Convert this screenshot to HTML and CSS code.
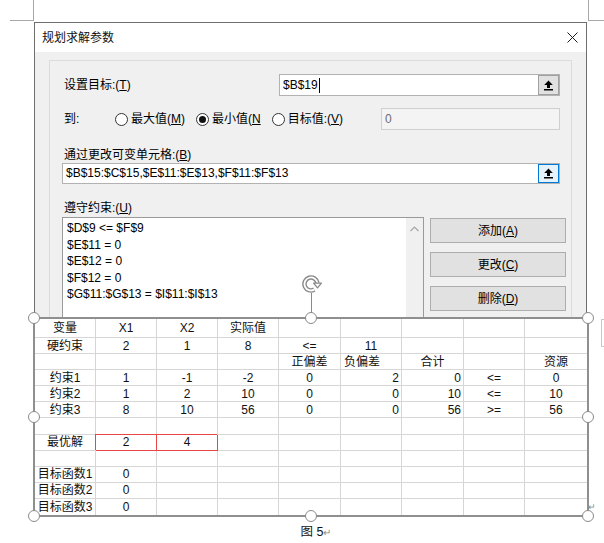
FILE: index.html
```html
<!DOCTYPE html>
<html lang="zh-CN">
<head>
<meta charset="utf-8">
<title>规划求解参数</title>
<link rel="stylesheet" href="styles.css">
</head>
<body>
<div class="page">
  <div class="marks"><div class="mark mark-l"></div><div class="mark mark-r"></div></div>
  <div class="figure">
    <div class="dialog">
      <div class="titlebar">
        <span class="title">规划求解参数</span>
        <svg class="close" width="11" height="11" viewBox="0 0 11 11"><path d="M0.5 0.5 L10.5 10.5 M10.5 0.5 L0.5 10.5" stroke="#1a1a1a" stroke-width="1" fill="none"/></svg>
      </div>
      <div class="dlg-body">
        <div class="group">
          <div class="row row-target">
            <span class="lbl">设置目标:(<u>T</u>)</span>
            <div class="field field-target">
              <span class="val">$B$19<span class="caret"></span></span>
              <span class="pick"><svg width="11" height="11" viewBox="0 0 11 11"><path d="M5.5 0.5 L9.8 5 H7 V8 H4 V5 H1.2 Z" fill="#000"/><rect x="1" y="9" width="9" height="1.5" fill="#000"/></svg></span>
            </div>
          </div>
          <div class="row row-to">
            <span class="lbl lbl-to">到:</span>
            <span class="opt"><span class="radio"></span>最大值(<u>M</u>)</span>
            <span class="opt"><span class="radio on"></span>最小值(<u>N</u></span>
            <span class="opt"><span class="radio"></span>目标值:(<u>V</u>)</span>
            <div class="field field-value disabled"><span class="val">0</span></div>
          </div>
          <div class="lbl lbl-block">通过更改可变单元格:(<u>B</u>)</div>
          <div class="field field-cells">
            <span class="val">$B$15:$C$15,$E$11:$E$13,$F$11:$F$13</span>
            <span class="pick focus"><svg width="11" height="11" viewBox="0 0 11 11"><path d="M5.5 0.5 L9.8 5 H7 V8 H4 V5 H1.2 Z" fill="#000"/><rect x="1" y="9" width="9" height="1.5" fill="#000"/></svg></span>
          </div>
          <div class="lbl lbl-block lbl-cons">遵守约束:(<u>U</u>)</div>
          <div class="cons">
            <div class="listbox">
              <div class="items">
                <div class="item">$D$9 &lt;= $F$9</div>
                <div class="item">$E$11 = 0</div>
                <div class="item">$E$12 = 0</div>
                <div class="item">$F$12 = 0</div>
                <div class="item">$G$11:$G$13 = $I$11:$I$13</div>
              </div>
              <div class="scroll"><svg width="9" height="6" viewBox="0 0 9 6"><path d="M0.5 5 L4.5 1 L8.5 5" stroke="#a6a6a6" stroke-width="1.2" fill="none"/></svg></div>
            </div>
            <div class="btns">
              <div class="btn">添加(<u>A</u>)</div>
              <div class="btn">更改(<u>C</u>)</div>
              <div class="btn">删除(<u>D</u>)</div>
            </div>
          </div>
        </div>
      </div>
    </div>

    <div class="sheet">
      <div class="grid">
        <div class="c">变量</div><div class="c">X1</div><div class="c">X2</div><div class="c">实际值</div><div class="c"></div><div class="c"></div><div class="c"></div><div class="c"></div><div class="c"></div>
        <div class="c">硬约束</div><div class="c">2</div><div class="c">1</div><div class="c">8</div><div class="c">&lt;=</div><div class="c">11</div><div class="c"></div><div class="c"></div><div class="c"></div>
        <div class="c"></div><div class="c"></div><div class="c"></div><div class="c"></div><div class="c">正偏差</div><div class="c l">负偏差</div><div class="c">合计</div><div class="c"></div><div class="c">资源</div>
        <div class="c">约束1</div><div class="c">1</div><div class="c">-1</div><div class="c">-2</div><div class="c">0</div><div class="c r">2</div><div class="c r">0</div><div class="c">&lt;=</div><div class="c">0</div>
        <div class="c">约束2</div><div class="c">1</div><div class="c">2</div><div class="c">10</div><div class="c">0</div><div class="c r">0</div><div class="c r">10</div><div class="c">&lt;=</div><div class="c">10</div>
        <div class="c">约束3</div><div class="c">8</div><div class="c">10</div><div class="c">56</div><div class="c">0</div><div class="c r">0</div><div class="c r">56</div><div class="c">&gt;=</div><div class="c">56</div>
        <div class="c"></div><div class="c"></div><div class="c"></div><div class="c"></div><div class="c"></div><div class="c"></div><div class="c"></div><div class="c"></div><div class="c"></div>
        <div class="c">最优解</div><div class="c sel">2</div><div class="c sel">4</div><div class="c"></div><div class="c"></div><div class="c"></div><div class="c"></div><div class="c"></div><div class="c"></div>
        <div class="c"></div><div class="c"></div><div class="c"></div><div class="c"></div><div class="c"></div><div class="c"></div><div class="c"></div><div class="c"></div><div class="c"></div>
        <div class="c">目标函数1</div><div class="c">0</div><div class="c"></div><div class="c"></div><div class="c"></div><div class="c"></div><div class="c"></div><div class="c"></div><div class="c"></div>
        <div class="c">目标函数2</div><div class="c">0</div><div class="c"></div><div class="c"></div><div class="c"></div><div class="c"></div><div class="c"></div><div class="c"></div><div class="c"></div>
        <div class="c">目标函数3</div><div class="c">0</div><div class="c"></div><div class="c"></div><div class="c"></div><div class="c"></div><div class="c"></div><div class="c"></div><div class="c"></div>
      </div>
      <svg class="rotator" width="26" height="40" viewBox="0 0 26 40">
        <path d="M16.25 14.6 A6.5 6.5 0 1 1 19.4 7.9" stroke="#8a8a8a" stroke-width="4.6" fill="none"/>
        <path d="M16.25 14.6 A6.5 6.5 0 1 1 19.4 7.9" stroke="#fff" stroke-width="1.8" fill="none"/>
        <path d="M15.6 8.2 L23.4 8.2 L19.5 12.8 Z" fill="#fff" stroke="#8a8a8a" stroke-width="1.3" stroke-linejoin="round"/>
        <path d="M13.5 18 V38" stroke="#8a8a8a" stroke-width="1"/>
      </svg>
      <span class="h h-tl"></span><span class="h h-tm"></span><span class="h h-tr"></span>
      <span class="h h-ml"></span><span class="h h-mr"></span>
      <span class="h h-bl"></span><span class="h h-bm"></span><span class="h h-br"></span>
      <span class="layout-btn"></span>
      <span class="anchor-mark">↵</span>
    </div>

    <div class="caption">图 5<span class="pm">↵</span></div>
  </div>
</div>
</body>
</html>
```

FILE: styles.css
```css
* { box-sizing: border-box; }
html, body { margin: 0; padding: 0; }
body {
  width: 604px;
  height: 543px;
  overflow: hidden;
  background: #fff;
  font-family: "Liberation Sans", "Noto Sans CJK SC", sans-serif;
  font-size: 12px;
  color: #000;
}
u { text-decoration: underline; text-underline-offset: 1px; }

.marks { display: flex; justify-content: space-between; height: 22px; align-items: flex-start; }
.mark { height: 21px; border-bottom: 1px solid #a8a8a8; }
.mark-l { margin-left: 10px; width: 24px; border-right: 1px solid #a8a8a8; }
.mark-r { width: 16px; border-left: 1px solid #a8a8a8; }

.figure { margin-left: 34px; width: 555px; }

/* dialog */
.dialog {
  width: 553px;
  height: 296px;
  border: 1px solid #6f6f6f;
  border-bottom: none;
  overflow: hidden;
  display: flex;
  flex-direction: column;
}
.titlebar {
  height: 29px;
  flex: none;
  background: #fff;
  display: flex;
  align-items: center;
  justify-content: space-between;
  padding: 0 8px 0 7px;
  color: #111;
}
.title { line-height: 16px; }
.dlg-body { flex: 1; background: #f0f0f0; padding: 8px 14px 0; }
.group {
  border: 1px solid #dcdcdc;
  padding: 0 5px 0 12px;
  height: 320px;
}
.lbl { line-height: 16px; padding-left: 2px; white-space: nowrap; }
.row { display: flex; align-items: center; height: 22px; margin-right: 6px; }
.row-target { margin-top: 13px; }
.row-to { margin-top: 12px; }
.lbl-to { width: 53px; }
.opt { display: flex; align-items: center; line-height: 16px; margin-right: 11px; white-space: nowrap; }
.radio {
  width: 13px; height: 13px;
  border: 1px solid #333;
  border-radius: 50%;
  background: #fff;
  margin-right: 3px;
  display: flex; align-items: center; justify-content: center;
}
.radio.on::after { content: ""; width: 7px; height: 7px; border-radius: 50%; background: #111; }

.field {
  display: flex;
  align-items: stretch;
  height: 22px;
  border: 1px solid #b2b2b2;
  background: #fff;
}
.field .val { flex: 1; line-height: 20px; padding-left: 3px; white-space: pre; display: flex; align-items: center; }
.field-target { width: 281px; margin-left: auto; }
.field-value { width: 179px; margin-left: auto; }
.field.disabled { background: #f4f4f4; border-color: #cfcfcf; color: #6d6d6d; }
.field-cells { height: 21px; margin-right: 6px; }
.field-cells .val { line-height: 19px; }
.caret { display: inline-block; width: 1px; height: 15px; background: #000; margin-left: 1px; }
.pick {
  width: 21px;
  flex: none;
  border: 1px solid #a0a0a0;
  background: #e1e1e1;
  display: flex; align-items: center; justify-content: center;
}
.pick.focus { border-color: #0078d7; background: #e5f1fb; }

.lbl-block { margin-top: 17px; }
.lbl-cons { margin-top: 16px; }

.cons { display: flex; margin-top: 1px; align-items: flex-start; }
.listbox {
  width: 362px;
  height: 120px;
  border: 1px solid #9a9a9a;
  background: #fff;
  display: flex;
}
.items { flex: 1; padding: 2px 0 0 4px; }
.item { line-height: 16.5px; white-space: pre; }
.scroll { width: 17px; background: #f0f0f0; display: flex; justify-content: center; align-items: flex-start; padding-top: 8px; }
.btns { margin-left: 6px; width: 136px; display: flex; flex-direction: column; gap: 9px; padding-top: 1px; }
.btn {
  height: 25px;
  border: 1px solid #adadad;
  background: #e1e1e1;
  display: flex; align-items: center; justify-content: center;
  line-height: 16px;
}

/* spreadsheet picture */
.sheet {
  position: relative;
  margin: -1px 0 0 -1px;
  width: 556px;
  height: 200px;
  border: 2px solid #8f8f8f;
  background: #fff;
}
.grid {
  display: grid;
  grid-template-columns: 61px 61px 61px 61px 62px 61px 62px 61px 1fr;
  grid-template-rows: 19px repeat(11, 1fr);
  height: 196px;
  color: #111;
}
.c {
  border-right: 1px solid #d6d6d6;
  border-bottom: 1px solid #d6d6d6;
  display: flex;
  align-items: center;
  justify-content: center;
  white-space: nowrap;
  line-height: 14px;
  font-size: 12px;
  min-width: 0;
}
.c:nth-child(9n) { border-right: none; }
.c:nth-last-child(-n+9) { border-bottom: none; }
.c.l { justify-content: flex-start; padding-left: 3px; }
.c.r { justify-content: flex-end; padding-right: 2px; }
.c.sel {
  position: relative;
  z-index: 1;
  border-right-color: #e84545;
  border-bottom-color: #e84545;
  box-shadow: -1px -1px 0 0 #e84545;
}

.h {
  position: absolute;
  z-index: 3;
  width: 12px; height: 12px;
  border-radius: 50%;
  border: 1.5px solid #8a8a8a;
  background: #fff;
  transform: translate(-50%, -50%);
}
.h-tl { left: -1px; top: -1px; }
.h-tm { left: 276px; top: -1px; }
.h-tr { left: 553px; top: -1px; }
.h-ml { left: -1px; top: 98px; }
.h-mr { left: 553px; top: 98px; }
.h-bl { left: -1px; top: 197px; }
.h-bm { left: 276px; top: 197px; }
.h-br { left: 553px; top: 197px; }

.rotator { position: absolute; left: 263px; top: -44px; z-index: 3; }
.layout-btn {
  position: absolute;
  left: 566px; top: 0;
  width: 22px; height: 28px;
  border: 1px solid #c8c8c8;
  background: #fff;
}
.anchor-mark {
  position: absolute;
  left: 553px; top: 183px;
  font-size: 9px;
  line-height: 10px;
  color: #8a8a8a;
}

.caption {
  margin-top: 7px;
  text-align: center;
  line-height: 16px;
  font-size: 12.5px;
  color: #111;
}
.pm { color: #8a8a8a; font-size: 10px; margin-right: -9px; }
```
